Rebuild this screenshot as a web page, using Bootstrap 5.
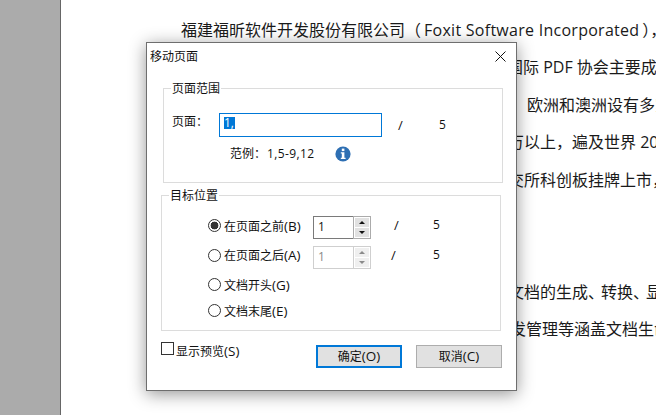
<!DOCTYPE html>
<html lang="zh">
<head>
<meta charset="utf-8">
<title>移动页面</title>
<link href="https://cdn.jsdelivr.net/npm/bootstrap@5.3.0/dist/css/bootstrap.min.css" rel="stylesheet">
<style>
html,body{width:656px;height:415px;overflow:hidden;background:#fff;}
body{font-family:"Open Sans","Noto Sans CJK SC",sans-serif;font-size:12px;color:#111;}
.stage{width:656px;height:415px;}
.side{width:61px;background:#ababab;border-right:1px solid #666;flex:none;}
.sheet{padding-top:12px;font-size:16px;line-height:37.4px;white-space:nowrap;color:#1a1a1a;flex:1;overflow:hidden;}
.i1{margin-left:120px}.i2{margin-left:446px}.i3{margin-left:466px}.i4{margin-left:449px}.i5{margin-left:447px}
.en{letter-spacing:.27px;margin:0 3px;}
.pn{letter-spacing:-3px;}
.dlg{position:absolute;left:146px;top:42px;width:371px;height:349px;background:#fff;border:1px solid #6e6e6e;box-shadow:0 3px 16px rgba(0,0,0,.42);line-height:16px;}
.ttl{height:27px;padding-left:3px;padding-right:10px;}
.grp{position:relative;width:340px;border:1px solid #dcdcdc;}
.g1{margin:18px 0 0 16px;height:95px;padding:24px 0 0 8px;}
.g2{margin:12px 0 0 14px;height:136px;padding:20px 0 0 46px;}
.cap{position:absolute;top:-8px;left:7px;background:#fff;padding:0 1px;line-height:16px;}
.lbl1{width:47px;margin-top:-6px;}
.pgbox{width:163px;height:24px;border:1px solid #0078d7;padding:3px 4px 0;display:flex;align-items:flex-start;font-size:12px;}
.sel{background:#0078d7;color:#fff;display:block;height:12px;line-height:12px;padding-right:1px;}
.sl1{margin-left:16px;font-size:13px;width:41px;}
.fives{font-size:12px;}
.hint{margin:9px 0 0 58px;height:16px;}
.nums{margin-left:1px;font-size:12px;width:68px;letter-spacing:.4px;}
.rw{height:23px;}
.r2{margin-top:7px}.r3{margin-top:5px}.r4{margin-top:3px}
.rd{appearance:none;width:13px;height:13px;border:1px solid #333;border-radius:50%;background:#fff;flex:none;margin-right:3px;position:relative;margin-top:-4px;}
.r3 .rd,.r4 .rd{margin-top:-2px;}
.rd:checked{background:radial-gradient(circle,#333 0,#333 3.6px,#fff 4.2px);}
.rtxt{width:89px;margin:-3px 0 0;white-space:nowrap;}
.r2 .rtxt{margin-top:-5px;}
.r3 .rtxt,.r4 .rtxt{margin-top:0;}
.lt{font-size:13.5px;}
.spin{width:58px;height:23px;}
.spval{width:40px;border:1px solid #7a7a7a;border-right:0;padding:0 0 0 4px;line-height:19px;font-size:12px;}
.spbtn{width:18px;border:1px solid #ababab;background:#fff;padding:1px;gap:1px;}
.spbtn span{flex:1;background:#e1e1e1;position:relative;display:flex;align-items:center;justify-content:center;}
.up{width:0;height:0;border:3.5px solid transparent;border-top:0;border-bottom:3px solid #111;}
.dn{width:0;height:0;border:3.5px solid transparent;border-bottom:0;border-top:3px solid #111;}
.off .spval{border-color:#cfcfcf;color:#8a8a8a;}
.off .spbtn{border-color:#cfcfcf;}
.off .spbtn span{background:#efefef;}
.off .up{border-bottom-color:#8a8a8a}.off .dn{border-top-color:#8a8a8a}
.sx{font-size:12px;margin-top:-5px;}
.s1a{margin-left:23px;width:39px;font-size:13px;}
.s1b{margin-left:20px;width:42px;font-size:13px;}
.foot{margin:11px 0 0 14px;padding-right:14px;}
.ck{appearance:none;width:13px;height:13px;border:1px solid #333;background:#fff;margin:0 2px 0 0;flex:none;}
.ckt{margin-top:1px;}
.btns{margin-top:3px;margin-left:auto;gap:14px;}
.bb{width:86px;height:23px;padding:0;font-size:12px;line-height:19px;background:#e1e1e1;border:1px solid #adadad;border-radius:0;color:#111;}
.bb.pri{border:2px solid #0078d7;}
</style>
</head>
<body>
<div class="stage d-flex">
  <div class="side"></div>
  <div class="sheet">
    <div class="i1">福建福昕软件开发股份有限公司（<span class="en">Foxit Software Incorporated</span>），</div>
    <div class="i2">国际 PDF 协会主要成</div>
    <div class="i3">欧洲和澳洲设有多家</div>
    <div class="i5">万以上，遍及世界 200</div>
    <div class="i5">交所科创板挂牌上市，</div>
    <div>&nbsp;</div>
    <div>&nbsp;</div>
    <div class="i5">文档的生成<span class="pn">、</span>转换<span class="pn">、</span>显</div>
    <div class="i4">发管理等涵盖文档生命</div>
  </div>
</div>

<div class="dlg" role="dialog">
  <div class="ttl d-flex align-items-center justify-content-between">
    <span>移动页面</span>
    <svg width="11" height="11" viewBox="0 0 11 11"><path d="M.5.5l10 10M10.5.5l-10 10" stroke="#111" stroke-width="1" fill="none"/></svg>
  </div>

  <div class="grp g1">
    <div class="cap">页面范围</div>
    <div class="d-flex align-items-center">
      <span class="lbl1">页面：</span>
      <div class="pgbox"><span class="sel">1,</span></div>
      <span class="sl1">/</span>
      <span class="fives">5</span>
    </div>
    <div class="hint d-flex align-items-center">
      <span>范例：</span>
      <span class="nums">1,5-9,12</span>
      <svg width="16" height="16" viewBox="0 0 16 16"><circle cx="8" cy="8" r="7.6" fill="#2e6fb3"/><rect x="6.8" y="2.6" width="2.6" height="2.5" fill="#fff"/><path d="M5.8 6.3h3.6v5.4h1.2v1.3H5.8v-1.3h1V7.6h-1z" fill="#fff"/></svg>
    </div>
  </div>

  <div class="grp g2">
    <div class="cap">目标位置</div>
    <div class="rw d-flex align-items-center">
      <input class="rd" type="radio" name="pos" id="p1" checked>
      <label class="rtxt" for="p1">在页面之前<span class="lt">(B)</span></label>
      <div class="spin d-flex">
        <div class="spval">1</div>
        <div class="spbtn d-flex flex-column"><span><i class="up"></i></span><span><i class="dn"></i></span></div>
      </div>
      <span class="sx s1a">/</span><span class="sx">5</span>
    </div>
    <div class="rw r2 d-flex align-items-center">
      <input class="rd" type="radio" name="pos" id="p2">
      <label class="rtxt" for="p2">在页面之后<span class="lt">(A)</span></label>
      <div class="spin off d-flex">
        <div class="spval">1</div>
        <div class="spbtn d-flex flex-column"><span><i class="up"></i></span><span><i class="dn"></i></span></div>
      </div>
      <span class="sx s1b">/</span><span class="sx">5</span>
    </div>
    <div class="rw r3 d-flex align-items-center">
      <input class="rd" type="radio" name="pos" id="p3">
      <label class="rtxt" for="p3">文档开头<span class="lt">(G)</span></label>
    </div>
    <div class="rw r4 d-flex align-items-center">
      <input class="rd" type="radio" name="pos" id="p4">
      <label class="rtxt" for="p4">文档末尾<span class="lt">(E)</span></label>
    </div>
  </div>

  <div class="foot d-flex align-items-start">
    <input class="ck" type="checkbox" id="pv">
    <label class="ckt" for="pv">显示预览<span class="lt">(S)</span></label>
    <div class="btns d-flex">
      <button class="btn bb pri" type="button">确定<span class="lt">(O)</span></button>
      <button class="btn bb" type="button">取消<span class="lt">(C)</span></button>
    </div>
  </div>
</div>
</body>
</html>
